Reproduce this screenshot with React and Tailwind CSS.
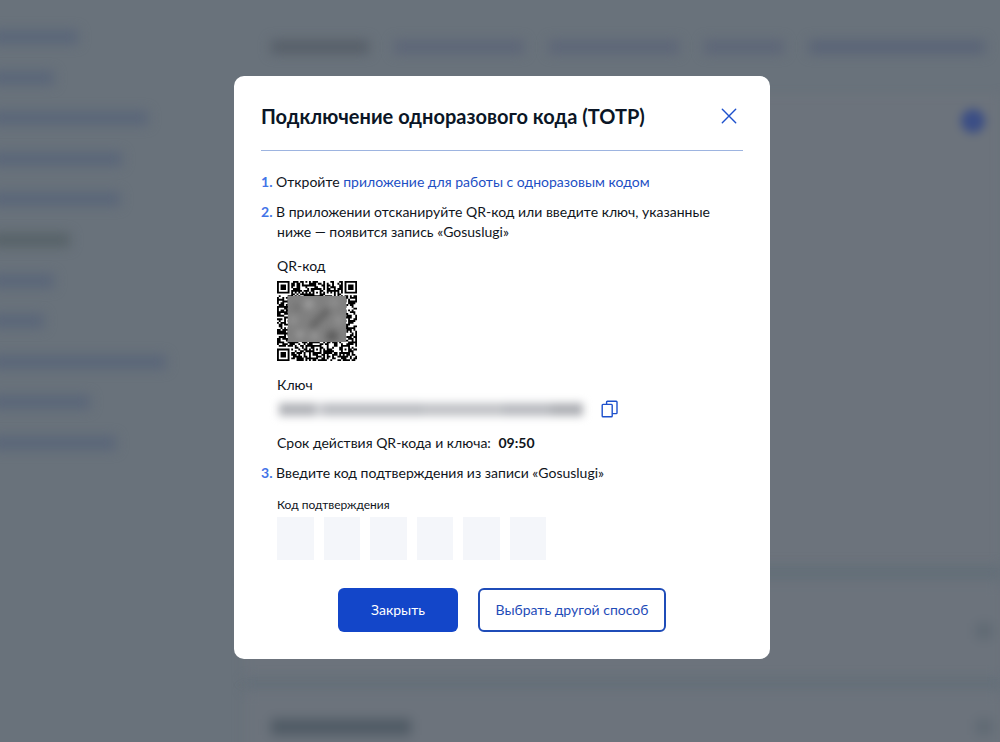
import React from 'react';

// Sidebar placeholder rows
const sideRows = [
    'w-[86px] bg-[#5a6679]',
    'w-[62px] bg-[#5a6679]',
    'w-[156px] bg-[#5a6679]',
    'w-[130px] bg-[#5a6679]',
    'w-[128px] bg-[#5a6679]',
    'w-[78px] bg-[#576268]',
    'w-[62px] bg-[#5a6679]',
    'w-[52px] bg-[#5a6679]',
    'w-[174px] bg-[#5a6679]',
    'w-[98px] bg-[#5a6679]',
    'w-[124px] bg-[#5a6679]',
];

// Top tab placeholders
const tabs = [
    'w-[98px] bg-[#575f69]',
    'w-[130px] bg-[#5d6678]',
    'w-[130px] bg-[#5d6678]',
    'w-[80px] bg-[#5d6678]',
    'w-[176px] bg-[#5a6477]',
];

const QR_SIZE = 45;
const ALIGN = [[6, 22], [22, 6], [22, 38], [38, 22], [38, 38]];

const isDark = (x, y) => {
    const corners = [[0, 0], [QR_SIZE - 7, 0], [0, QR_SIZE - 7]];
    for (const [cx, cy] of corners) {
        const d = Math.max(Math.abs(x - cx - 3), Math.abs(y - cy - 3));
        if (d <= 4) return d !== 4 && d !== 2;
    }
    for (const [cx, cy] of ALIGN) {
        const d = Math.max(Math.abs(x - cx), Math.abs(y - cy));
        if (d <= 2) return d !== 1;
    }
    if (x === 6 || y === 6) return (x + y) % 2 === 0;
    const n = Math.sin(x * 12.9898 + y * 78.233) * 43758.5453;
    return n - Math.floor(n) > 0.45;
};

const QrCode = () => {
    let path = '';
    for (let y = 0; y < QR_SIZE; y++) {
        for (let x = 0; x < QR_SIZE; x++) {
            if (isDark(x, y)) path += `M${x} ${y}h1.05v1.05h-1.05z`;
        }
    }
    return (
        <svg viewBox="0 0 45 45" className="block size-20" role="img" aria-label="QR-код">
            <defs>
                <filter id="soft" x="-50%" y="-50%" width="200%" height="200%">
                    <feGaussianBlur stdDeviation="1.8" />
                </filter>
                <clipPath id="mask">
                    <rect x="6" y="8.4" width="33" height="26" />
                </clipPath>
            </defs>
            <path d={path} fill="#000" />
            <g clipPath="url(#mask)">
                <rect x="6" y="8.4" width="33" height="26" fill="#808080" />
                <g filter="url(#soft)">
                    <circle cx="18" cy="13" r="3" fill="#999" />
                    <circle cx="32" cy="12" r="3" fill="#8c8c8c" />
                    <circle cx="9" cy="22" r="3" fill="#8e8e8e" />
                    <path d="M19 26L29 16" stroke="#666" strokeWidth="4" />
                    <circle cx="13" cy="30" r="2.5" fill="#989898" />
                    <circle cx="21" cy="31" r="2.5" fill="#949494" />
                    <circle cx="35" cy="22" r="3" fill="#8e8e8e" />
                    <circle cx="31" cy="31" r="3.5" fill="#606060" />
                    <circle cx="11" cy="15" r="2.5" fill="#747474" />
                </g>
            </g>
        </svg>
    );
};

const Backdrop = () => (
    <div className="flex h-screen overflow-hidden" aria-hidden="true">
        <div className="-ml-2 flex w-[253px] shrink-0 flex-col pt-[30px]">
            <div className="flex h-[420px] flex-col justify-between">
                {sideRows.map((row, i) => (
                    <div key={i} className={`h-[14px] shrink-0 blur-[6px] ${row}`} />
                ))}
            </div>
        </div>
        <div className="flex min-w-0 flex-1 flex-col">
            <div className="flex gap-[25px] pt-10 pl-[26px]">
                {tabs.map((tab, i) => (
                    <div key={i} className={`h-[14px] shrink-0 blur-[6px] ${tab}`} />
                ))}
            </div>
            <div className="mt-7 mr-14 h-[3px] bg-[#636d77] blur-[3px]" />
            <div className="mt-3 flex h-[472px] shrink-0 justify-end bg-[#6c737c] pt-[15px] pr-[15px] blur-[5px]">
                <div className="size-6 rounded-full bg-[#3b4e85]" />
            </div>
            <div className="h-4 shrink-0 bg-[#646f79] blur-[6px]" />
            <div className="flex h-[97px] shrink-0 items-center justify-end bg-[#6c737c] pr-2 blur-[6px]">
                <div className="h-4 w-4 bg-[#5f6973]" />
            </div>
            <div className="h-3 shrink-0 bg-[#646f79] blur-[6px]" />
            <div className="flex h-24 shrink-0 justify-between bg-[#6c737c] pt-7 pr-2 pl-[26px] blur-[6px]">
                <div className="h-4 w-[140px] bg-[#4f5a64]" />
                <div className="h-4 w-4 bg-[#5f6973]" />
            </div>
        </div>
    </div>
);

const Step = ({ number, children }) => (
    <p className="pl-4 -indent-4">
        <span className="font-bold text-[#4274e8]">{number}.</span> {children}
    </p>
);

const App = () => {
    return (
        <div className="relative min-h-screen overflow-hidden bg-[#69727b] font-['Lato','Noto_Sans',sans-serif] text-sm leading-5">
            <Backdrop />

            {/* Modal */}
            <div className="absolute inset-0 flex items-start justify-center overflow-auto pt-[76px] pl-1">
                <div
                    role="dialog"
                    aria-labelledby="dialog-title"
                    className="w-full max-w-[536px] rounded-[10px] bg-white px-[27px] pt-6 pb-[27px] text-[#10151c]"
                >
                    <header className="flex items-center justify-between border-b border-[#9db4e0] pb-[18px]">
                        <h1 id="dialog-title" className="text-xl leading-8 font-bold text-[#0b1626]">
                            Подключение одноразового кода (TOTP)
                        </h1>
                        <button type="button" aria-label="Закрыть окно" className="mr-[6px]">
                            <svg viewBox="0 0 16 16" className="size-4" fill="none" stroke="#1d50cc" strokeWidth="1.4" strokeLinecap="round">
                                <path d="M1.3 1.3l13.4 13.4M14.7 1.3L1.3 14.7" />
                            </svg>
                        </button>
                    </header>

                    <div className="flex flex-col gap-[10px] pt-[21px]">
                        <Step number={1}>
                            Откройте{' '}
                            <a href="#app" className="text-[#1d4fc4]">приложение для работы с одноразовым кодом</a>
                        </Step>
                        <Step number={2}>
                            В приложении отсканируйте QR-код или введите ключ, указанные ниже — появится запись «Gosuslugi»
                        </Step>
                    </div>

                    <div className="pt-[14px] pl-4">
                        <div className="pb-[5px]">QR-код</div>
                        <QrCode />
                        <div className="pt-[14px]">Ключ</div>
                        <div className="flex items-center gap-4 pt-1">
                            {/* Hidden key value */}
                            <div className="flex h-5 w-[308px] items-center px-[2px] blur-[4px]">
                                <div className="h-[13px] w-9 bg-[#b0b2b7]" />
                                <div className="h-[13px] w-2 bg-[#cfd0d4]" />
                                <div className="h-[13px] flex-1 bg-[#bbbdc2]" />
                                <div className="h-[13px] w-20 bg-[#c0c2c6]" />
                                <div className="h-[13px] w-12 bg-[#b8babf]" />
                                <div className="h-[13px] w-8 bg-[#adafb4]" />
                            </div>
                            <button type="button" aria-label="Скопировать ключ">
                                <svg viewBox="0 0 18 18" className="size-[18px]" fill="none" stroke="#1d50cc" strokeWidth="1.4" strokeLinejoin="round">
                                    <path d="M5.6 4.4V2a.8.8 0 0 1 .8-.8h8.8a.8.8 0 0 1 .8.8v10.8a.8.8 0 0 1-.8.8h-4" />
                                    <rect x="1.2" y="4.4" width="10" height="12.4" rx="0.8" />
                                </svg>
                            </button>
                        </div>
                        <div className="pt-[14px]">
                            Срок действия QR-кода и ключа: <b className="ml-1 font-bold">09:50</b>
                        </div>
                    </div>

                    <div className="pt-[10px]">
                        <Step number={3}>Введите код подтверждения из записи «Gosuslugi»</Step>
                    </div>

                    <div role="group" aria-labelledby="code-label" className="pt-3 pl-4">
                        <label id="code-label" htmlFor="code-0" className="block text-xs leading-5">Код подтверждения</label>
                        <div className="grid max-w-[269px] grid-cols-6 gap-[10px] pt-[2px]">
                            {[0, 1, 2, 3, 4, 5].map((i) => (
                                <input
                                    key={i}
                                    id={`code-${i}`}
                                    aria-label={`Цифра ${i + 1}`}
                                    maxLength={1}
                                    inputMode="numeric"
                                    className="h-[43px] w-full min-w-0 bg-[#f4f6fa] text-center text-xl outline-none"
                                />
                            ))}
                        </div>
                    </div>

                    <div className="flex justify-center gap-5 pt-7">
                        <button type="button" className="h-11 w-[120px] rounded-md bg-[#1346c9] text-white">
                            Закрыть
                        </button>
                        <button type="button" className="h-11 w-[188px] rounded-md border-2 border-[#1f4cb8] text-[#1f4cb8]">
                            Выбрать другой способ
                        </button>
                    </div>
                </div>
            </div>
        </div>
    );
};

export default App;
